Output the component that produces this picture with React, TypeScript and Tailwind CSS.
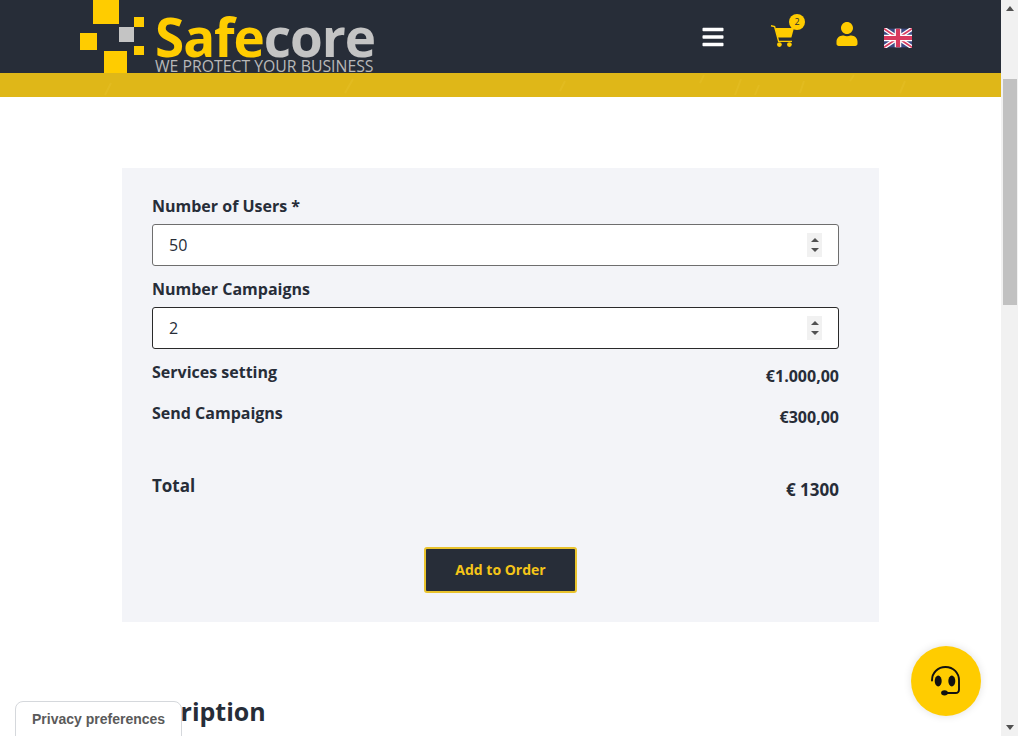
import { FaBars, FaUser } from "react-icons/fa";

function Spinner() {
  return (
    <div className="w-[15px] h-[24px] bg-[#f1f1f1] flex flex-col items-center justify-center gap-[6px]">
      <div className="w-0 h-0 border-x-[4px] border-x-transparent border-b-[4px] border-b-[#505050]" />
      <div className="w-0 h-0 border-x-[4px] border-x-transparent border-t-[4px] border-t-[#505050]" />
    </div>
  );
}

function NumberField({ label, value, border }: { label: string; value: string; border: string }) {
  return (
    <div className="mb-[11px]">
      <div className="text-[16px] leading-[24px] font-bold text-[#272d38] mb-[6px]">{label}</div>
      <div className={`h-[42px] bg-white border rounded-[3px] flex items-center pl-[16px] pr-[16px] ${border}`}>
        <input readOnly value={value} className="flex-1 min-w-0 bg-transparent outline-none text-[16px] text-[#272d38]" />
        <Spinner />
      </div>
    </div>
  );
}

function PriceRow({ label, value, cls }: { label: string; value: string; cls: string }) {
  return (
    <div className={`flex justify-between leading-[24px] font-bold text-[#272d38] ${cls}`}>
      <span>{label}</span>
      <span className="pt-[4px]">{value}</span>
    </div>
  );
}

function Logo() {
  return (
    <div className="flex items-start h-[73px] ml-[80px] overflow-hidden">
      <svg width="64" height="73" viewBox="0 0 64 73" className="shrink-0">
        <rect x="13" y="0" width="26" height="24" fill="#ffcc00" />
        <rect x="0" y="33" width="17" height="17" fill="#ffcc00" />
        <rect x="39" y="27" width="15" height="15" fill="#c4c4c4" />
        <rect x="54" y="17" width="10" height="10" fill="#ffcc00" />
        <rect x="54" y="46" width="10" height="9" fill="#ffcc00" />
        <rect x="24" y="51" width="23" height="22" fill="#ffcc00" />
      </svg>
      <div className="ml-[11px] flex flex-col">
        <div className="text-[53px] leading-[46px] mt-[14px] font-bold tracking-[-1.05px] whitespace-nowrap">
          <span className="text-[#ffcc00]">Safe</span>
          <span className="text-[#c4c4c4]">core</span>
        </div>
        <div className="text-[15.8px] leading-[13px] font-medium text-[#b8b8b8] whitespace-nowrap">WE PROTECT YOUR BUSINESS</div>
      </div>
    </div>
  );
}

function Flag() {
  return (
    <svg width="28" height="20" viewBox="0 0 60 40" className="block">
      <rect width="60" height="40" fill="#3d4a85" />
      <path d="M0 0L60 40M60 0L0 40" stroke="#fff" strokeWidth="9" />
      <path d="M0 0L60 40M60 0L0 40" stroke="#d83a5e" strokeWidth="3.5" />
      <path d="M30 0V40M0 20H60" stroke="#fff" strokeWidth="14" />
      <path d="M30 0V40M0 20H60" stroke="#d83a5e" strokeWidth="9" />
    </svg>
  );
}

function Cart() {
  return (
    <svg width="25" height="23" viewBox="0 0 25 23" fill="none" className="block">
      <path d="M1 0.8L4.6 1.6L8.6 16.4H22" stroke="#ffcc00" strokeWidth="1.4" />
      <path d="M5.2 3H24L21.4 12.4H7.6Z" fill="#ffcc00" />
      <circle cx="9.4" cy="19.6" r="2.4" fill="#ffcc00" />
      <circle cx="19.4" cy="19.6" r="2.4" fill="#ffcc00" />
    </svg>
  );
}

function Headset() {
  return (
    <svg width="30" height="30" viewBox="0 0 30 30" fill="none">
      <path d="M1 14.5C1 6.5 7 1 14.5 1C22.5 1 28 7 28 14.5V23.5C28 26 26.5 27 24.5 27H13" stroke="#111" strokeWidth="1.9" strokeLinecap="round" />
      <ellipse cx="7.2" cy="15" rx="3.5" ry="5.4" fill="#111" />
      <ellipse cx="20.8" cy="15" rx="3.5" ry="5.4" fill="#111" />
      <ellipse cx="13.5" cy="26.8" rx="3.4" ry="2.6" fill="#111" />
    </svg>
  );
}

export default function App() {
  return (
    <div className="relative h-[736px] w-[1018px] flex overflow-hidden bg-white font-['Open_Sans',sans-serif]">
      <div className="w-[1001px] shrink-0 flex flex-col">
        <header className="h-[73px] bg-[#272d38] flex items-start justify-between shrink-0">
          <Logo />
          <nav className="flex items-start mr-[89px]">
            <FaBars className="text-white mt-[25px] mr-[45px]" size={24} />
            <div className="relative mt-[25px] mr-[40px]">
              <Cart />
              <span className="absolute -top-[11px] left-[19px] w-[16px] h-[16px] rounded-full bg-[#ffcc00] text-[#272d38] text-[9px] leading-[16px] text-center">2</span>
            </div>
            <FaUser className="text-[#ffcc00] mt-[22px] mr-[25px]" size={24} />
            <div className="mt-[28px]"><Flag /></div>
          </nav>
        </header>
        <div className="h-[24px] bg-[#dfb718] shrink-0 overflow-hidden">
          <svg width="1001" height="24" viewBox="0 0 1001 24" fill="none" stroke="#e9c52f" strokeWidth="2" opacity="0.35">
            <path d="M105 22l6-12M345 20l8-14M560 18l5-10M700 10l4-8M735 22l6-16M755 22l4-10M800 20l4-12M850 8l4-6M900 20l5-12" />
          </svg>
        </div>
        <main className="mx-[122px] w-[757px] pt-[71px]">
          <section className="bg-[#f3f4f8] pt-[26px] pb-[29px] pl-[30px] pr-[40px]">
            <NumberField label="Number of Users *" value="50" border="border-[#6e6e6e]" />
            <NumberField label="Number Campaigns" value="2" border="border-[#2a2a2a]" />
            <PriceRow label="Services setting" value="€1.000,00" cls="h-[41px] text-[16px]" />
            <PriceRow label="Send Campaigns" value="€300,00" cls="h-[72px] text-[16px]" />
            <PriceRow label="Total" value="€ 1300" cls="h-[74px] text-[17px] pt-[1px]" />
            <div className="flex justify-center ml-[10px]">
              <button className="w-[153px] h-[46px] pb-[1px] bg-[#272d38] border-2 border-[#e9c32d] rounded-[3px] text-[14px] font-bold text-[#f5c518]">
                Add to Order
              </button>
            </div>
          </section>
          <h2 className="mt-[70px] text-[25px] leading-[38px] font-bold text-[#272d38]">Description</h2>
        </main>
      </div>

      <div className="w-[17px] shrink-0 bg-[#f1f1f1] flex flex-col items-center">
        <div className="mt-[6px] w-0 h-0 border-x-[4px] border-x-transparent border-b-[5px] border-b-[#505050]" />
        <div className="mt-[68px] w-[14px] h-[226px] bg-[#c1c1c1]" />
        <div className="mt-auto mb-[6px] w-0 h-0 border-x-[4px] border-x-transparent border-t-[5px] border-t-[#505050]" />
      </div>

      <div className="absolute left-[15px] top-[701px] w-[167px] h-[50px] bg-white border border-[#d5d8dc] rounded-t-[8px] pl-[16px] pt-[9px] text-[14px] leading-[17px] font-bold text-[#5a5a5a] font-['Liberation_Sans',sans-serif]">
        Privacy preferences
      </div>

      <div className="absolute left-[911px] top-[646px] w-[70px] h-[70px] rounded-full bg-[#ffcc00] shadow-[0_0_8px_rgba(0,0,0,0.12)] flex items-center justify-center">
        <Headset />
      </div>
    </div>
  );
}
